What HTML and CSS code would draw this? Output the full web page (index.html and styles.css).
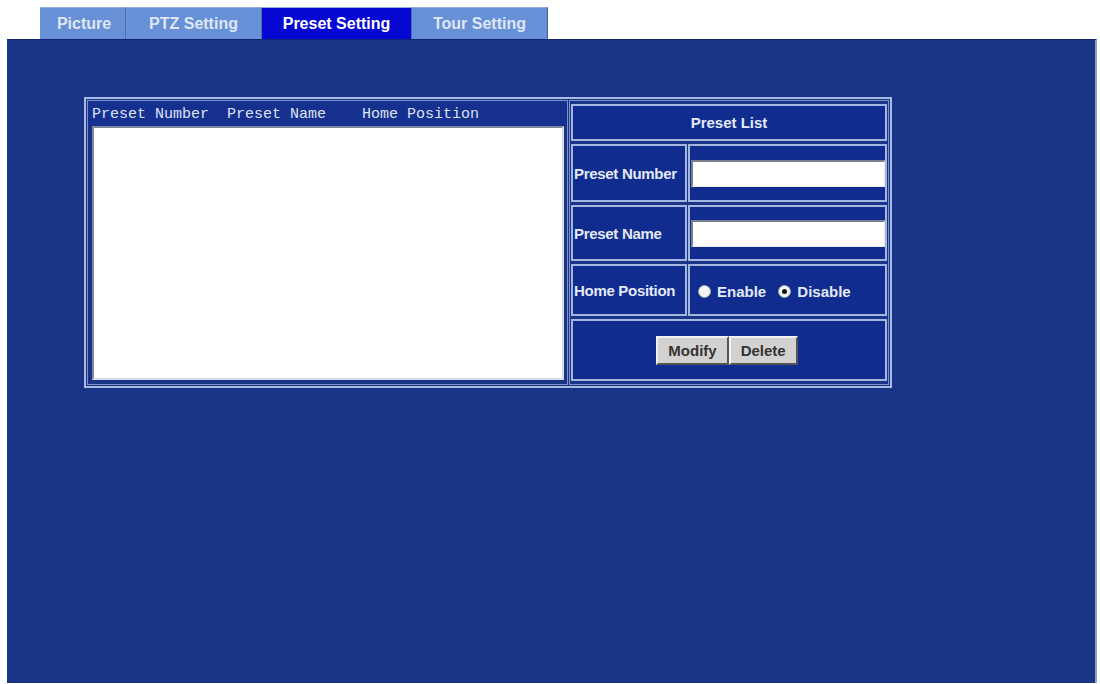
FILE: index.html
```html
<!DOCTYPE html>
<html>
<head>
    <title>Preset Setting</title>
    <meta charset="UTF-8">
    <link rel="stylesheet" href="styles.css">
</head>
<body>
    <div class="tabs">
        <a class="tab tab-picture">Picture</a>
        <a class="tab tab-ptz">PTZ Setting</a>
        <a class="tab tab-preset active">Preset Setting</a>
        <a class="tab tab-tour">Tour Setting</a>
    </div>
    <div class="panel">
        <table class="preset-table">
            <tr>
                <td class="list-cell">
                    <div class="list-head">Preset Number  Preset Name    Home Position</div>
                    <div class="list-box"></div>
                </td>
                <td class="form-cell">
                    <table class="form-table">
                        <tr class="row-title">
                            <th colspan="2">Preset List</th>
                        </tr>
                        <tr class="row-number">
                            <td class="label">Preset Number</td>
                            <td class="value"><input type="text" class="text-box"></td>
                        </tr>
                        <tr class="row-name">
                            <td class="label">Preset Name</td>
                            <td class="value"><input type="text" class="text-box"></td>
                        </tr>
                        <tr class="row-home">
                            <td class="label">Home Position</td>
                            <td class="value">
                                <label class="radio"><input type="radio" name="home"> Enable</label>
                                <label class="radio"><input type="radio" name="home" checked> Disable</label>
                            </td>
                        </tr>
                        <tr class="row-buttons">
                            <td colspan="2">
                                <div class="buttons">
                                    <button class="btn">Modify</button><button class="btn">Delete</button>
                                </div>
                            </td>
                        </tr>
                    </table>
                </td>
            </tr>
        </table>
    </div>
</body>
</html>
```

FILE: styles.css
```css
body {
    margin: 0;
    padding: 0;
    background-color: white;
    font-family: 'Liberation Sans', Arial, sans-serif;
}

.tabs {
    display: flex;
    margin-left: 40px;
    padding-top: 7px;
    width: 508px;
}
.tab {
    display: block;
    height: 32px;
    line-height: 31px;
    text-align: center;
    background-color: #6790d6;
    color: #dfe7f6;
    font-size: 16px;
    font-weight: bold;
    border-right: 1px solid #4d6ea8;
    border-top: 1px solid #8eaee0;
    box-sizing: border-box;
}
.tab-picture { width: 86px; padding-left: 3px; }
.tab-ptz { width: 136px; }
.tab-preset { width: 150px; }
.tab-tour { width: 136px; border-right: 1px solid #3e5f96; }
.tab.active {
    background-color: #0707d4;
    color: white;
}

.panel {
    margin: 0 3px 0 7px;
    height: 644px;
    background-color: #1a3587;
    border-top: 1px solid #0f2470;
    border-right: 2px solid #8ea2cc;
    box-sizing: border-box;
    padding: 57px 0 0 77px;
}

/* outer frame */
.preset-table {
    border-collapse: separate;
    border-spacing: 1px;
    border: 2px solid #a8bbe2;
    background-color: #1a3587;
}
.preset-table > tbody > tr > td {
    padding: 0;
    vertical-align: top;
}

.list-cell {
    width: 479px;
    border: 1px solid #7d93c6;
}
.list-head {
    font-family: 'Liberation Mono', 'Courier New', monospace;
    font-size: 15px;
    white-space: pre;
    color: #dde3f3;
    padding: 5px 0 0 4px;
    height: 20px;
    background-color: #163090;
}
.list-box {
    margin: 0 0 1px 4px;
    width: 472px;
    height: 254px;
    background-color: white;
    border-top: 2px solid #8088a0;
    border-left: 2px solid #8088a0;
    border-right: 2px solid #d8dce8;
    border-bottom: 2px solid #d8dce8;
    box-sizing: border-box;
}

.form-cell {
    border: 1px solid #7d93c6;
}
.form-table {
    border-collapse: separate;
    border-spacing: 1px 3px;
    width: 318px;
}
.form-table th,
.form-table td {
    border: 2px solid #a3b6df;
    background-color: #0f2c8e;
    color: #e3e9f7;
    font-size: 15px;
    font-weight: bold;
    padding: 0;
}
.row-title th {
    height: 33px;
    text-align: center;
}
.form-table .label {
    width: 112px;
    padding-left: 1px;
    white-space: nowrap;
    letter-spacing: -0.3px;
}
.row-number td { height: 54px; }
.row-name td { height: 52px; }
.row-home td { height: 48px; }
.row-buttons td { height: 58px; }

.text-box {
    display: block;
    margin-left: 1px;
    width: 194px;
    height: 27px;
    box-sizing: border-box;
    border-top: 2px solid #7a7f90;
    border-left: 2px solid #7a7f90;
    border-right: 1px solid #e8e8e8;
    border-bottom: 1px solid #e8e8e8;
    background-color: white;
}

.radio {
    display: inline-flex;
    align-items: center;
    margin-left: 8px;
    margin-top: 3px;
}
.radio input {
    appearance: none;
    -webkit-appearance: none;
    width: 13px;
    height: 13px;
    margin: 0 6px 0 0;
    border-radius: 50%;
    background-color: #f4f4f4;
    border: 1px solid #9aa;
    position: relative;
}
.radio input:checked::after {
    content: "";
    position: absolute;
    left: 3px;
    top: 3px;
    width: 5px;
    height: 5px;
    border-radius: 50%;
    background-color: #111;
}

.buttons {
    display: flex;
    justify-content: center;
    padding-right: 4px;
}
.btn {
    font-family: 'Liberation Sans', Arial, sans-serif;
    font-size: 15px;
    font-weight: bold;
    color: #333;
    background-color: #d4d2d0;
    border-top: 2px solid #f2f2f2;
    border-left: 2px solid #f2f2f2;
    border-right: 2px solid #555;
    border-bottom: 2px solid #555;
    height: 29px;
    padding: 0 10px;
}
```
